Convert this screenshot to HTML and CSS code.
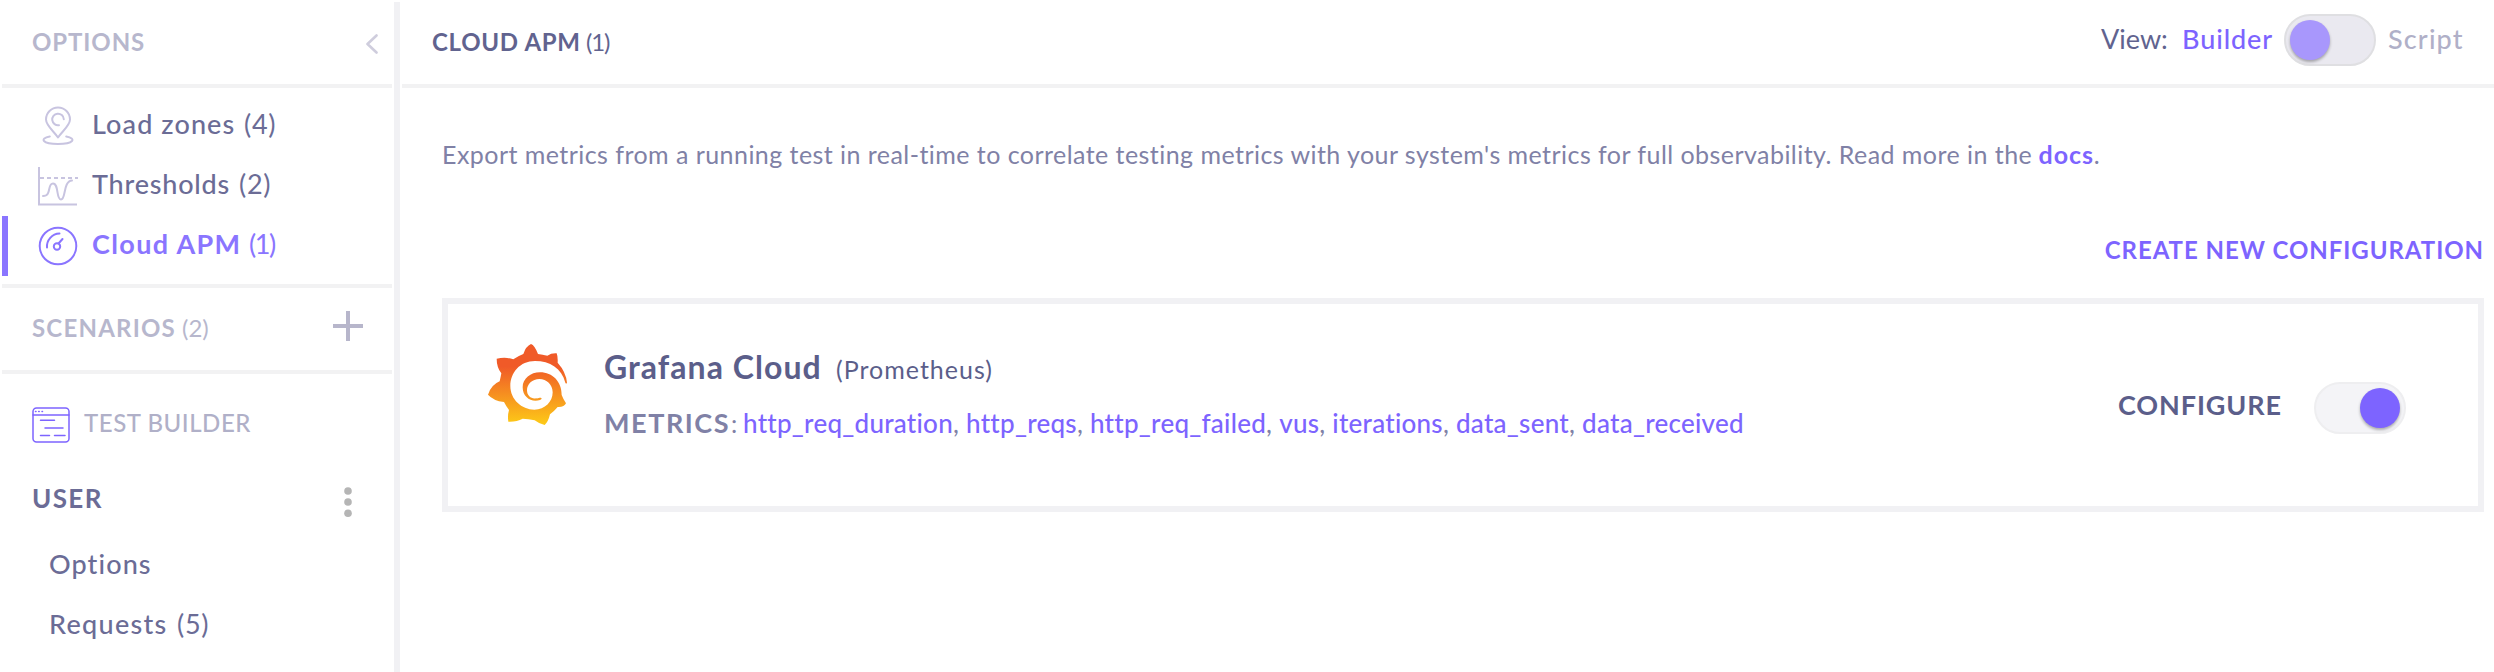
FILE: index.html
```html
<!DOCTYPE html>
<html lang="en">
<head>
<meta charset="utf-8">
<title>Cloud APM</title>
<link rel="stylesheet" href="styles.css">
</head>
<body>
<div class="app">
  <aside class="sidebar">
    <div class="side-header">
      <h2 class="side-title options-title">OPTIONS</h2>
      <svg class="chevron" width="12" height="20" viewBox="0 0 12 20"><path d="M10.5 1.5 1.5 10l9 8.500" fill="none" stroke="#cfcddd" stroke-width="2.600" stroke-linecap="round" stroke-linejoin="round"/></svg>
    </div>
    <nav class="nav">
      <a class="nav-item">
        <svg class="nav-icon" width="40" height="60" viewBox="0 0 40 60" fill="none" stroke="#c8c4e0" stroke-width="2" stroke-linecap="round">
          <path d="M20 41.500C16 35.500 8 29.500 8 23.500a12 12 0 0 1 24 0c0 6-8 12-12 18z" stroke-linejoin="round"/>
          <path d="M21 29.200a5.800 5.800 0 1 1 4.800-6"/>
          <path d="M11.800 40.400C1 42.600 4.500 48 20 48s19-5.400 8.200-7.600"/>
        </svg>
        <span class="label load">Load zones</span><span class="count">(4)</span>
      </a>
      <a class="nav-item">
        <svg class="nav-icon" width="40" height="60" viewBox="0 0 40 60" fill="none" stroke="#c8c4e0" stroke-width="2">
          <path d="M1 11v37.500h38"/>
          <path d="M2 22h38" stroke-dasharray="4 3"/>
          <path d="M5 40c9 0 4-12.500 10-12.500S18 43.500 23 43.500 25 25 34 24.500" stroke-linecap="round"/>
        </svg>
        <span class="label thresholds">Thresholds</span><span class="count">(2)</span>
      </a>
      <a class="nav-item active">
        <svg class="nav-icon" width="40" height="60" viewBox="0 0 40 60" fill="none" stroke="#8a75ff" stroke-width="2" stroke-linecap="round">
          <circle cx="20" cy="30" r="18.300"/>
          <path d="M9 31.500A13 13 0 0 1 21.500 17.500M20.500 27.500l4-4.500"/>
          <circle cx="19" cy="30.500" r="3.200"/>
        </svg>
        <span class="label apm">Cloud APM</span><span class="count">(1)</span>
      </a>
    </nav>
    <div class="scenarios">
      <h2 class="side-title scenarios-title">SCENARIOS</h2><span class="side-count">(2)</span>
      <svg class="plus" width="30" height="30" viewBox="0 0 30 30"><path d="M15 0v30M0 15h30" stroke="#b7b6cb" stroke-width="4"/></svg>
    </div>
    <div class="builder-row">
      <svg class="builder-icon" width="38" height="36" viewBox="0 0 38 36" fill="none" stroke="#7d64ff" stroke-width="1.500" stroke-linecap="round">
        <rect x="1" y="1" width="36" height="34" rx="3.500"/>
        <path d="M1 8h36M8.500 13.300h14M13 21h18M8.500 28.600h9M22.500 28.600h10.500"/>
        <path d="M3.500 4.500h.500M6.700 4.500h.500M10 4.500h.500"/>
      </svg>
      <span class="builder-label">TEST BUILDER</span>
    </div>
    <div class="user-row">
      <h3 class="user-title">USER</h3>
      <svg class="dots" width="8" height="30" viewBox="0 0 8 30" fill="#b5b5b5"><circle cx="4" cy="4" r="3.800"/><circle cx="4" cy="15" r="3.800"/><circle cx="4" cy="26.200" r="3.800"/></svg>
    </div>
    <a class="sub-item"><span class="sub-options">Options</span></a>
    <a class="sub-item"><span class="sub-requests">Requests</span><span class="sub-count">(5)</span></a>
  </aside>

  <main class="main">
    <header class="main-header">
      <h1 class="main-title">CLOUD APM</h1><span class="main-count">(1)</span>
      <div class="view">
        <span class="view-label">View:</span>
        <span class="view-builder">Builder</span>
        <span class="toggle toggle-view"><span class="knob"></span></span>
        <span class="view-script">Script</span>
      </div>
    </header>
    <section class="content">
      <p class="intro"><span class="intro-text">Export metrics from a running test in real-time to correlate testing metrics with your system's metrics for full observability. Read more in the</span> <a class="docs">docs</a>.</p>
      <div class="actions"><a class="create">CREATE NEW CONFIGURATION</a></div>
      <article class="card">
        <svg class="logo" width="120" height="110" viewBox="0 0 360 330">
          <defs><linearGradient id="sun" gradientUnits="userSpaceOnUse" x1="0" y1="285" x2="0" y2="110"><stop offset="0" stop-color="#fdcb17"/><stop offset="1" stop-color="#f05a28"/></linearGradient></defs>
          <path fill="url(#sun)" d="M183 42Q194 46 204 72Q218 74 232 77Q244 69 260 70Q264 80 263 98Q288 126 291 158Q289 163 286 158C275 115 240 93 195 93C150 93 121 128 121 168C121 208 155 239 193 239C225 239 248 215 248 187C248 164 230 147 208 147C187 147 171 162 171 181C171 198 185 208 198 205C206 206 209 202 214 204Q217 207 210 210C185 218 158 203 158 172C158 146 182 127 210 127C248 127 275 155 275 195Q280 208 288 220Q283 232 263 231Q254 242 240 253Q235 275 224 285Q208 282 194 271Q175 267 158 266Q140 276 115 275Q112 258 117 240Q108 228 102 216Q70 212 54 194Q64 164 89 154Q92 142 94 130Q80 112 80 86Q108 80 130 88Q144 78 160 72Q168 48 183 42Z"/>
        </svg>
        <div class="card-text">
          <div class="card-head"><h2 class="card-title">Grafana Cloud</h2><span class="card-sub">(Prometheus)</span></div>
          <p class="metrics"><b class="metrics-label">METRICS</b><span class="colon">:</span><span class="metric-list"><a>http_req_duration</a>, <a>http_reqs</a>, <a>http_req_failed</a>, <a>vus</a>, <a>iterations</a>, <a>data_sent</a>, <a>data_received</a></span></p>
        </div>
        <span class="configure">CONFIGURE</span>
        <span class="toggle toggle-on"><span class="knob"></span></span>
      </article>
    </section>
  </main>
</div>
</body>
</html>
```
FILE: styles.css
```css
* { box-sizing: border-box; }
body { margin: 0; background: #fff; color: #6b6c96; font-family: Lato, "Open Sans", sans-serif; font-size: 27px; white-space: nowrap; overflow: hidden; }
h1, h2, h3, p { margin: 0; font-size: inherit; }
svg { display: block; flex: none; }

.app { display: flex; height: 672px; padding: 2px 0 0 2px; }

/* Sidebar */
.sidebar { flex: none; width: 398px; border-right: 6px solid #f1f1f4; padding-right: 2px; }
.side-header { display: flex; align-items: center; justify-content: space-between; height: 86px; padding: 0 14px 4px 30px; border-bottom: 4px solid #f2f2f3; }
.side-title { font-size: 24px; font-weight: 700; color: #b7b7cd; }
.options-title { letter-spacing: .9px; }
.chevron { margin-top: 6px; }
.nav { padding: 8px 0; border-bottom: 4px solid #f2f2f3; }
.nav-item { display: flex; height: 60px; padding-left: 36px; line-height: 56px; }
.nav-item.active { padding-left: 30px; border-left: 6px solid #8a75ff; color: #8a75ff; }
.label { margin-left: 14px; font-weight: 500; }
.active .label { font-weight: 700; }
.load { letter-spacing: 1.1px; width: 152px; }
.thresholds { letter-spacing: .8px; width: 147px; }
.apm { letter-spacing: 1.35px; width: 157px; }
.count { letter-spacing: .7px; }
.active .count { letter-spacing: -1.4px; }
.scenarios { display: flex; align-items: center; height: 86px; padding: 0 29px 4px 30px; border-bottom: 4px solid #f2f2f3; }
.scenarios-title { letter-spacing: 1.2px; width: 150px; }
.side-count { font-size: 24px; color: #b7b7cd; }
.plus { margin-left: auto; margin-top: -2px; }
.builder-row { display: flex; align-items: center; height: 60px; margin-top: 21px; padding-left: 30px; }
.builder-label { margin: -5px 0 0 14px; font-size: 24px; font-weight: 500; letter-spacing: .55px; color: #b0b0c8; }
.user-row { display: flex; align-items: center; justify-content: space-between; height: 60px; margin-top: 17px; padding: 0 40px 0 30px; }
.user-title { margin-top: -8px; font-size: 26px; font-weight: 700; letter-spacing: 1.4px; }
.sub-item { display: flex; height: 60px; padding-left: 47px; line-height: 60px; font-weight: 500; }
.user-row + .sub-item { margin-top: 2px; }
.sub-options { letter-spacing: 1.1px; }
.sub-requests { letter-spacing: 1.3px; width: 128px; }
.sub-count { font-weight: 400; letter-spacing: .7px; }

/* Main panel */
.main { flex: 1; padding-left: 2px; }
.main-header { display: flex; align-items: center; height: 86px; padding: 0 29px 0 30px; border-bottom: 4px solid #f2f2f3; font-size: 24px; color: #61638f; }
.main-title { margin-top: -4px; width: 154px; font-weight: 700; letter-spacing: .7px; }
.main-count { margin-top: -4px; letter-spacing: -1.2px; }
.view { display: flex; align-items: center; margin-left: auto; margin-top: -6px; height: 52px; font-size: 27px; }
.view-label, .view-builder, .view-script { margin-top: -4px; }
.view-label { letter-spacing: 0; width: 81px; }
.view-builder { width: 102px; font-weight: 500; letter-spacing: .9px; color: #7d64ff; }
.view-script { margin-left: 12px; width: 77px; font-weight: 500; letter-spacing: 1.15px; color: #b0b0c8; }
.toggle { display: flex; align-items: center; flex: none; width: 92px; height: 52px; padding: 0 4px; border: 2px solid #eeeef0; border-radius: 26px; background: #f4f4f7; }
.knob { width: 40px; height: 40px; border-radius: 50%; background: #7d64ff; box-shadow: 0 2px 3px rgba(0, 0, 0, .3); }
.toggle-view { background: #eae9f0; border-color: #dfdfe2; }
.toggle-view .knob { background: #a897fc; }
.toggle-on { justify-content: flex-end; }

.content { padding: 0 10px 0 40px; }
.intro { margin-top: 47px; height: 39px; line-height: 38px; font-size: 25px; color: #8081a6; }
.intro-text { letter-spacing: .45px; }
.docs { font-weight: 700; letter-spacing: .9px; color: #7d64ff; }
.actions { display: flex; justify-content: flex-end; height: 124px; padding-top: 57px; line-height: 38px; }
.create { font-size: 24px; font-weight: 700; letter-spacing: .95px; color: #7d64ff; }
.card { display: flex; height: 214px; border: 6px solid #f1f1f4; padding: 26px 72px 0 22px; color: #5b5e8a; }
.card-text { margin-left: 14px; padding-top: 18px; }
.card-head { display: flex; align-items: baseline; height: 56px; line-height: 38px; }
.card-title { width: 232px; font-size: 32px; font-weight: 700; letter-spacing: 1.05px; }
.card-sub { font-size: 25px; letter-spacing: 1px; }
.metrics { display: flex; align-items: baseline; line-height: 38px; color: #8081a6; }
.metrics-label { width: 127px; font-weight: 700; letter-spacing: 1.55px; }
.colon { width: 12px; font-size: 25px; }
.metric-list { font-size: 26px; letter-spacing: .26px; }
.metric-list a { font-weight: 500; color: #7d64ff; }
.configure { margin: 56px 32px 0 auto; line-height: 38px; height: 38px; font-weight: 700; letter-spacing: .9px; }
.toggle-on { margin-top: 52px; }
```
